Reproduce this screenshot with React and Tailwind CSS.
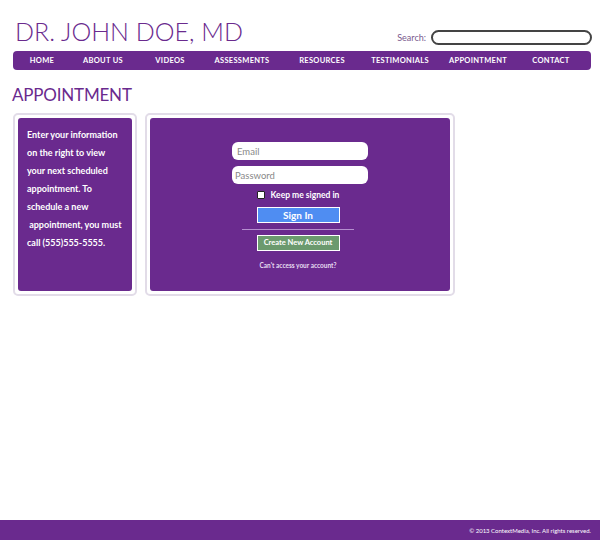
const navItems = ['HOME', 'ABOUT US', 'VIDEOS', 'ASSESSMENTS', 'RESOURCES', 'TESTIMONIALS', 'APPOINTMENT', 'CONTACT']

export default function App() {
  return (
    <div className="min-h-[540px] flex flex-col bg-white font-['Lato',sans-serif]">
      <div className="flex-1">
        {/* header */}
        <div className="flex items-end justify-between pl-[15px] pr-[8px] pt-[16px]">
          <h1 className="text-[25px] leading-[30px] font-light text-[#6a2a8e]">DR. JOHN DOE, MD</h1>
          <div className="flex items-center gap-[5px] mb-[1px]">
            <span className="text-[9px] text-[#7a5a8e]">Search:</span>
            <input type="text" className="w-[161px] h-[15px] rounded-full border-2 border-[#444] bg-white" />
          </div>
        </div>

        {/* nav */}
        <div className="ml-[13px] w-[578px] mt-[5px] h-[19px] rounded-[4px] bg-[#6a2a8e] flex items-center">
          <div className="grid grid-cols-[58px_64px_70px_74px_86px_70px_86px_60px] w-full text-center text-[7.5px] font-bold text-white tracking-[0.3px]">
            {navItems.map((item) => (
              <span key={item}>{item}</span>
            ))}
          </div>
        </div>

        <h2 className="ml-[12px] mt-[15px] text-[17px] leading-[20px] text-[#6a2a8e] tracking-[-0.2px]">APPOINTMENT</h2>

        {/* content */}
        <div className="flex gap-[8px] ml-[13px] mt-[8px]">
          <div className="w-[124px] h-[183px] rounded-[5px] border-2 border-[#e2dce8] p-[3px]">
            <div className="h-full rounded-[3px] bg-[#6a2a8e] px-[9px] pt-[8px] text-[9px] font-bold leading-[18px] text-white">
              Enter your information on the right to view your next scheduled appointment. To schedule a new &nbsp;appointment, you must call (555)555-5555.
            </div>
          </div>

          <div className="w-[310px] h-[183px] rounded-[5px] border-2 border-[#e2dce8] p-[3px]">
            <div className="h-full rounded-[3px] bg-[#6a2a8e] flex flex-col items-center pt-[24px]">
              <input placeholder="Email" className="w-[136px] h-[18px] rounded-[6px] bg-white px-[5px] text-[9.5px] text-[#555] placeholder:text-[#888] outline-none" />
              <input placeholder="Password" className="mt-[6px] w-[136px] h-[18px] rounded-[6px] bg-white px-[3px] text-[9.5px] text-[#555] placeholder:text-[#888] outline-none" />
              <label className="mt-[5px] -ml-[4px] flex items-center gap-[6px] text-[8.5px] font-bold text-white">
                <span className="w-[8px] h-[8px] border border-[#222] bg-white rounded-[1px]" />
                Keep me signed in
              </label>
              <button className="mt-[5px] -ml-[4px] w-[83px] h-[16px] border border-white bg-[#4f8df2] text-[10px] font-bold text-white leading-none">
                Sign In
              </button>
              <div className="mt-[6px] -ml-[4px] w-[112px] h-[1px] bg-[#b58fcf]" />
              <button className="mt-[5px] -ml-[4px] w-[83px] h-[16px] border border-white bg-[#6b9a6e] text-[7.5px] font-bold text-white leading-none">
                Create New Account
              </button>
              <span className="mt-[10px] -ml-[4px] text-[6.5px] font-bold text-[#e6dcf0]">Can't access your account?</span>
            </div>
          </div>
        </div>
      </div>

      {/* footer */}
      <div className="h-[20px] bg-[#6a2a8e] flex items-center justify-end pr-[9px]">
        <span className="text-[6px] text-white">© 2013 ContextMedia, Inc. All rights reserved.</span>
      </div>
    </div>
  )
}
